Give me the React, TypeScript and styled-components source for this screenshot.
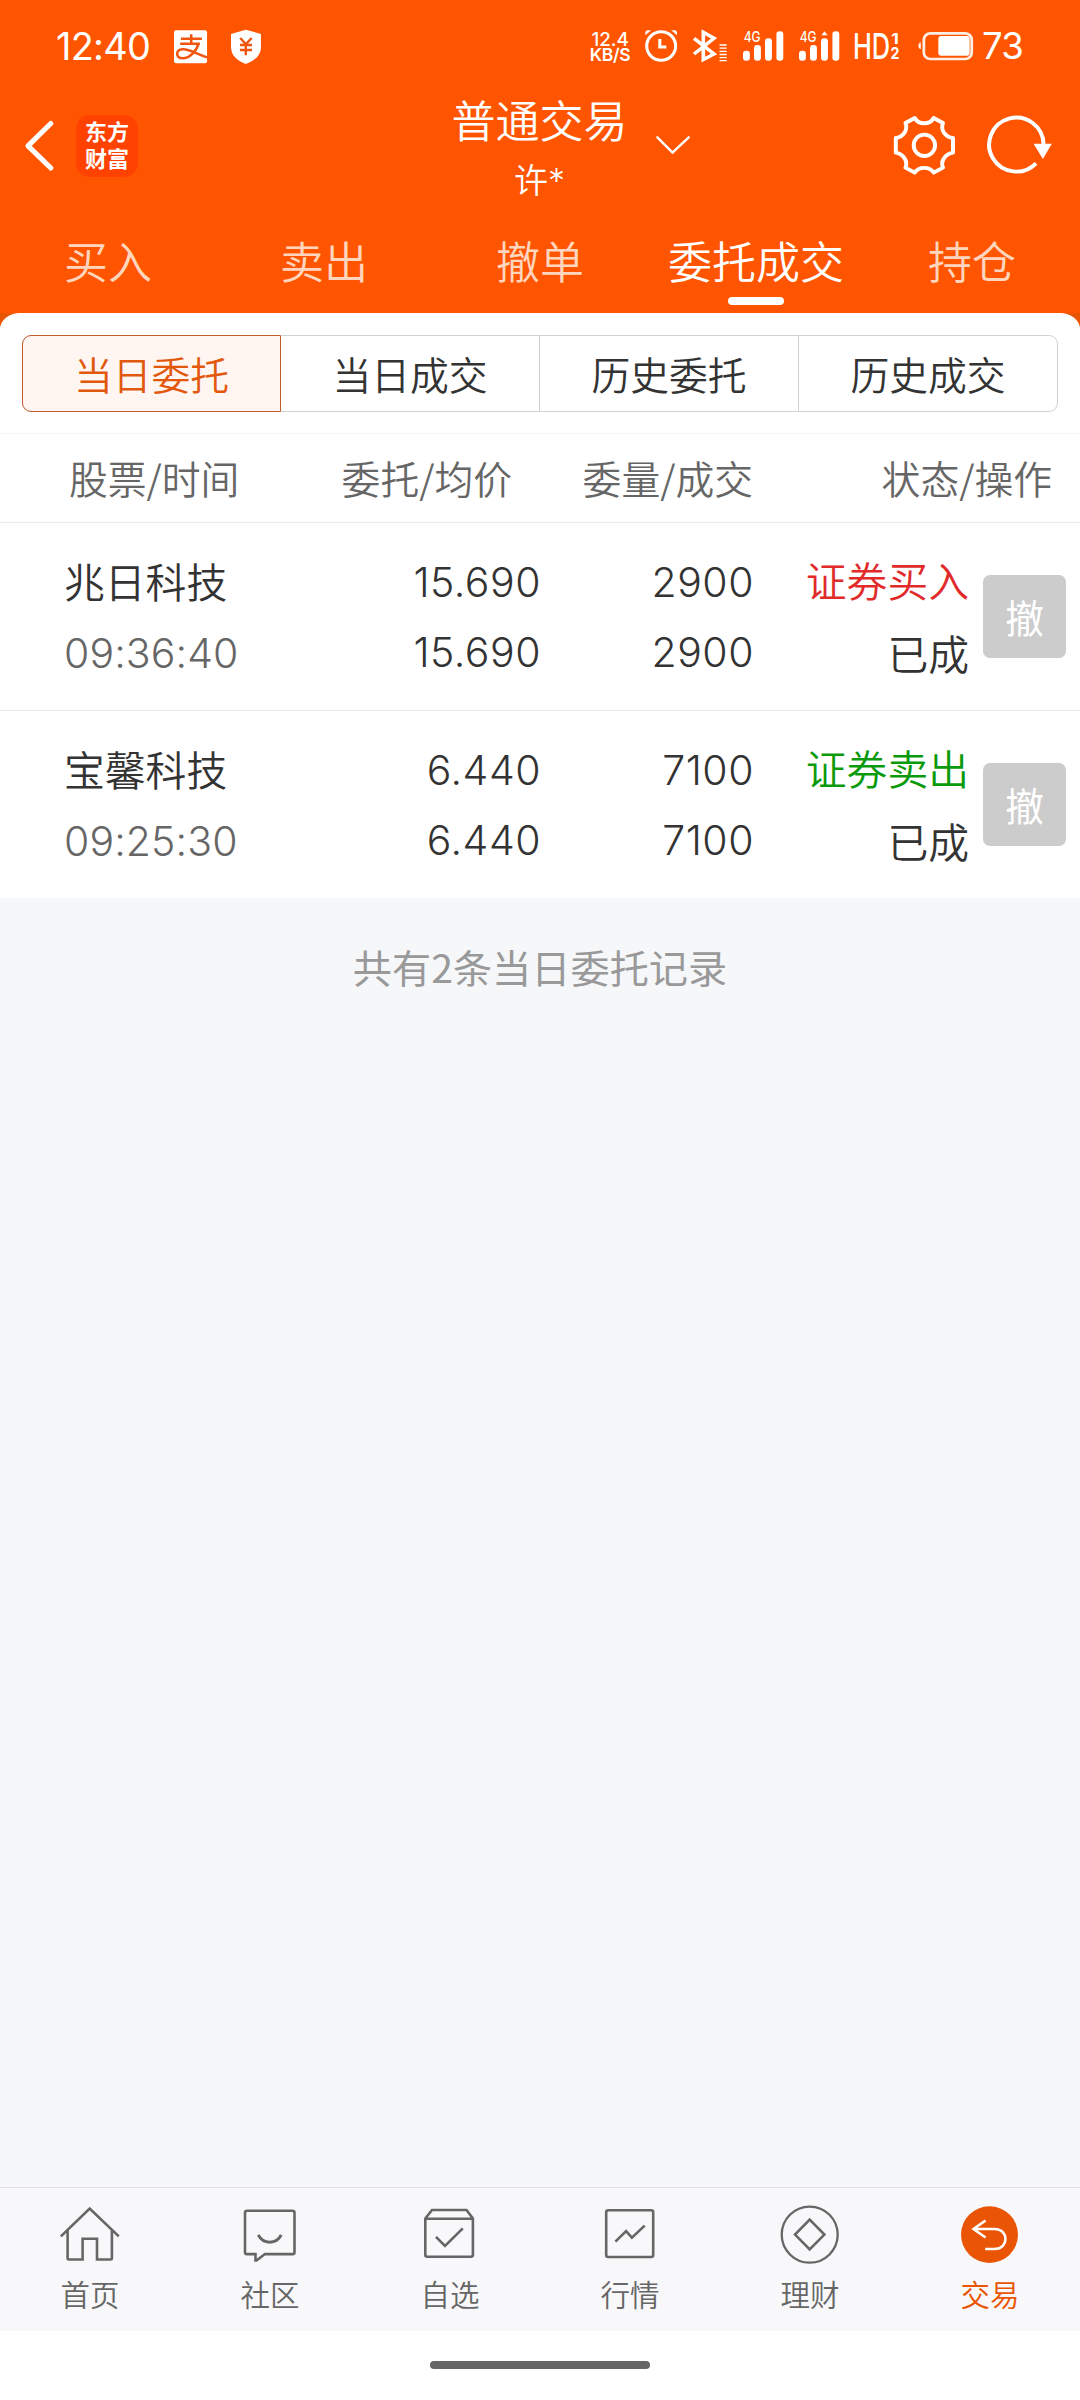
import React from 'react';
import styled, { createGlobalStyle } from 'styled-components';

const CJK = '"Noto Sans CJK SC", "Noto Sans", sans-serif';
const LATIN = 'Inter, Roboto, sans-serif';

const GlobalStyle = createGlobalStyle`
  * { box-sizing: border-box; }
  body { margin: 0; background: #fff; }
`;

const Screen = styled.div`
  width: 1080px;
  height: 2400px;
  display: flex;
  flex-direction: column;
  background: #f6f7f9;
  font-family: ${CJK};
  font-weight: 350;
  color: #333;
  overflow: hidden;
`;

const Header = styled.header`
  height: 313px;
  background: #ff5500;
  color: #fff;
  display: flex;
  flex-direction: column;
`;

const StatusBar = styled.div`
  height: 92px;
  padding: 0 58px 0 56px;
  display: flex;
  align-items: center;
  justify-content: space-between;
`;

const StatusGroup = styled.div`
  display: flex;
  align-items: center;
`;

const StatusText = styled.span<{ $size: number; $width: number; $left?: number }>`
  font-family: ${LATIN};
  font-weight: 400;
  font-size: ${p => p.$size}px;
  line-height: 44px;
  width: ${p => p.$width}px;
  margin-left: ${p => p.$left ?? 0}px;
  letter-spacing: -0.7px;
  white-space: nowrap;
`;

const Speed = styled.div`
  width: 42px;
  display: flex;
  flex-direction: column;
  align-items: center;
  font-family: ${LATIN};
  white-space: nowrap;
  line-height: 15px;
  padding-top: 2px;
`;

const SpeedValue = styled.span`
  font-size: 18.8px;
  font-weight: 450;
`;

const SpeedUnit = styled.span`
  font-size: 17.5px;
  font-weight: 600;
  letter-spacing: -0.3px;
`;

const Glyph = styled.svg<{ $left?: number }>`
  display: block;
  flex: none;
  overflow: visible;
  margin-left: ${p => p.$left ?? 0}px;
`;

const TitleBar = styled.div`
  height: 128px;
  padding: 0 25px 0 24px;
  display: grid;
  grid-template-columns: 1fr 182px 1fr;
`;

const TitleLeft = styled.div`
  display: flex;
  align-items: flex-start;
  padding-top: 23px;
  gap: 20px;
`;

const Logo = styled.div`
  width: 62px;
  height: 62px;
  border-radius: 14px;
  background: #ff4200;
  font-size: 22px;
  font-weight: 700;
  line-height: 27px;
  text-align: center;
  padding-top: 2px;
  white-space: nowrap;
`;

const TitleCenter = styled.div`
  display: flex;
  flex-direction: column;
  align-items: center;
  white-space: nowrap;
`;

const Title = styled.h1`
  margin: 0;
  padding-top: 2px;
  font-size: 44px;
  font-weight: 350;
  line-height: 50px;
  height: 63px;
`;

const Account = styled.span`
  font-size: 34px;
  line-height: 48px;
`;

const Star = styled.span`
  font-family: ${LATIN};
  line-height: 1;
`;

const TitleRight = styled.div`
  display: flex;
  align-items: flex-start;
  padding-top: 20.5px;
`;

const DropSlot = styled.div`
  padding: 22px 0 0 25px;
  flex: 1;
`;

const Tabs = styled.nav`
  height: 93px;
  display: grid;
  grid-template-columns: repeat(5, 1fr);
`;

const Tab = styled.div<{ $active: boolean }>`
  display: flex;
  flex-direction: column;
  align-items: center;
  padding-top: 10px;
  font-size: 44px;
  line-height: 60px;
  color: ${p => (p.$active ? '#fff' : '#ffd5bd')};

  &::after {
    content: '';
    width: 56px;
    height: 8px;
    margin-top: 7px;
    border-radius: 4px;
    background: ${p => (p.$active ? '#fff' : 'transparent')};
  }
`;

const PanelBack = styled.div`
  background: linear-gradient(#ea5504 14px, #fff 14px);
`;

const Panel = styled.main`
  background: #fff;
  border-radius: 20px 20px 0 0 / 16px 16px 0 0;
`;

const Segments = styled.div`
  display: grid;
  grid-template-columns: repeat(4, 1fr);
  height: 120px;
  padding: 22px 22px;
`;

const Segment = styled.div<{ $active: boolean }>`
  height: 77px;
  border: 1px solid ${p => (p.$active ? '#c05a2a' : '#cfd2d3')};
  border-left-width: ${p => (p.$active ? 1 : 0)}px;
  background: ${p => (p.$active ? '#fff6f2' : '#fff')};
  color: ${p => (p.$active ? '#e2580d' : '#333')};
  font-size: 38.8px;
  line-height: 74px;
  text-align: center;

  &:first-child { border-radius: 9px 0 0 9px; }
  &:last-child { border-radius: 0 9px 9px 0; }
`;

const HeadRow = styled.div`
  height: 90px;
  border-top: 1px solid #f5f5f5;
  border-bottom: 1px solid #ebebeb;
  display: grid;
  grid-template-columns: 243px 200px 241px 299px;
  padding-left: 69px;
  font-size: 38.8px;
  line-height: 87px;
  color: #666;
  white-space: nowrap;
`;

const HeadCell = styled.span<{ $right?: boolean }>`
  text-align: ${p => (p.$right ? 'right' : 'left')};
`;

const OrderRow = styled.div`
  height: 188px;
  border-bottom: 1px solid #ebebeb;
  display: grid;
  grid-template-columns: 256px 221px 213px 215px 98px;
  padding: 34px 0 0 64px;

  &:last-child {
    height: 187px;
    border-bottom: 0;
  }
`;

const Cell = styled.div<{ $right?: boolean }>`
  display: flex;
  flex-direction: column;
  align-items: ${p => (p.$right ? 'flex-end' : 'flex-start')};
  white-space: nowrap;
`;

const CjkText = styled.span<{ $color?: string; $shift?: number }>`
  font-size: 40.8px;
  line-height: 50px;
  height: 72px;
  margin-top: ${p => p.$shift ?? 0}px;
  color: ${p => p.$color ?? '#333'};
`;

const Num = styled.span<{ $muted?: boolean }>`
  font-family: ${LATIN};
  font-weight: 320;
  font-size: 41px;
  letter-spacing: ${p => (p.$muted ? 0.1 : 0.5)}px;
  line-height: 50px;
  height: 70px;
  color: ${p => (p.$muted ? '#666' : '#333')};
`;

const CancelButton = styled.button`
  width: 83px;
  height: 83px;
  margin: 18px 0 0 14px;
  padding: 0;
  border: 0;
  border-radius: 7px;
  background: #ccc;
  color: #fff;
  font-family: ${CJK};
  font-weight: 400;
  font-size: 38.7px;
  line-height: 81px;
`;

const Summary = styled.p`
  margin: 0;
  flex: 1;
  padding-top: 38px;
  text-align: center;
  color: #999;
  font-size: 39.2px;
  font-weight: 400;
  line-height: 60px;
`;

const BottomNav = styled.nav`
  height: 144px;
  border-top: 1px solid #e0e0e2;
  background: #f8f8fa;
  display: grid;
  grid-template-columns: repeat(6, 1fr);
`;

const NavItem = styled.div<{ $active: boolean }>`
  display: flex;
  flex-direction: column;
  align-items: center;
  padding-top: 16px;
  font-size: 29.5px;
  line-height: 40px;
  color: ${p => (p.$active ? '#e95504' : '#666')};

  span { margin-top: 9px; }
`;

const GestureArea = styled.div`
  height: 69px;
  background: #fff;
  display: flex;
  justify-content: center;
  padding-top: 30px;
`;

const GestureBar = styled.div`
  width: 220px;
  height: 8px;
  border-radius: 4px;
  background: #666;
`;

interface DrawingProps {
  x: number;
  y?: number;
  w: number;
  h?: number;
  left?: number;
  children: React.ReactNode;
}

function Drawing({ x, y = 80, w, h = 115, left, children }: DrawingProps) {
  return (
    <Glyph
      $left={left}
      width={w / 2.904}
      height={h / 3}
      viewBox={`${x} ${y} ${w} ${h}`}
      preserveAspectRatio="none"
      fill="none"
      stroke="#fff"
    >
      {children}
    </Glyph>
  );
}

function GlyphText({ x, y, size, length, weight = 500, children }: {
  x: number; y: number; size: number; length: number; weight?: number; children: string;
}) {
  return (
    <text
      x={x}
      y={y}
      fontFamily={LATIN}
      fontSize={size}
      fontWeight={weight}
      textLength={length}
      lengthAdjust="spacingAndGlyphs"
      fill="#fff"
      stroke="none"
    >
      {children}
    </text>
  );
}

const AlipayIcon = () => (
  <Drawing x={505} w={96}>
    <rect x="505" y="90" width="96" height="99" rx="6" fill="#fff" stroke="none" />
    <g stroke="#f0560f" strokeWidth="7.5">
      <path d="M525 115H586M555 102V130M523 130H580" />
      <path d="M577 129C570 152 552 173 530 174C509 174 509 149 530 147C550 145 570 162 601 171" />
    </g>
  </Drawing>
);

const ShieldIcon = () => (
  <Drawing x={671} w={88} left={24}>
    <path d="M714 88L758 101V140C758 166 738 182 714 191C690 182 671 166 671 140V101Z" fill="#fff" stroke="none" />
    <path d="M698 113L714 132L731 113M714 132V165M697 134H732M697 149H732" stroke="#f0560f" strokeWidth="7" />
  </Drawing>
);

const AlarmIcon = () => (
  <Drawing x={304} w={94} left={14}>
    <ellipse cx="351" cy="137" rx="42" ry="43" strokeWidth="9" />
    <path d="M347 116V140H366" strokeWidth="9" />
    <path d="M305 105V95L310 90H322ZM397 105V95L392 90H380Z" fill="#fff" stroke="none" />
  </Drawing>
);

const BluetoothIcon = () => (
  <Drawing x={445} w={100} left={16}>
    <path d="M448 114L506 161L475 178V96L506 114L448 161" strokeWidth="10.5" />
    <path d="M522 134H543M522 143.5H543M522 153H543M522 162.5H543M522 172H543M522 181H543" strokeWidth="4" />
  </Drawing>
);

const SignalIcon = ({ second, left }: { second?: boolean; left: number }) => (
  <Drawing x={589} w={118} left={left}>
    <GlyphText x={591} y={126} size={44} length={49} weight={550}>4G</GlyphText>
    <g fill="#fff" stroke="none">
      <rect x="589" y="151" width="20" height="30" rx="9" />
      <rect x="621" y="134" width="20" height="47" rx="9" />
      <rect x="653" y="114" width="20" height="67" rx="9" />
      <rect x="686" y="93" width="20" height="88" rx="9" />
      {second && <path d="M663 93L672 105H654Z" />}
    </g>
  </Drawing>
);

const HdIcon = () => (
  <Drawing x={915} w={130} left={16}>
    <GlyphText x={909} y={176} size={105} length={108} weight={550}>HD</GlyphText>
    <GlyphText x={1020} y={130} size={45} length={22} weight={700}>1</GlyphText>
    <GlyphText x={1018} y={175} size={47} length={26} weight={700}>2</GlyphText>
  </Drawing>
);

const BatteryIcon = () => (
  <Drawing x={1097} w={160} left={18}>
    <rect x="1114" y="99" width="139" height="77" rx="19" strokeWidth="8" strokeOpacity="0.9" />
    <rect x="1156" y="107" width="91" height="59" rx="8" fill="#fff" stroke="none" />
    <path d="M1105 126V147C1096 144 1096 129 1105 126Z" fill="#fff" stroke="none" />
  </Drawing>
);

const BackIcon = () => (
  <svg width="32" height="62" viewBox="0 0 32 62" fill="none" stroke="#fff" strokeWidth="5.2" strokeLinecap="round" strokeLinejoin="round">
    <path d="M26.8 8.5L4 30.8L26.8 53" />
  </svg>
);

const DropIcon = () => (
  <Drawing x={336} y={404} w={100} h={60}>
    <path d="M340 411L384 457L431 411" strokeWidth="7" strokeLinecap="round" />
  </Drawing>
);

const GearIcon = () => (
  <Drawing x={1020} y={338} w={192} h={194}>
    <g strokeWidth="11.5" strokeLinejoin="round">
      <path d="M1089 353C1100 374 1133 374 1144 353L1171 368C1162 391 1180 411 1200 413V457C1180 460 1162 480 1171 502L1144 517C1133 498 1100 498 1089 517L1062 502C1071 480 1053 460 1034 457V413C1053 411 1071 391 1062 368Z" />
      <ellipse cx="1117" cy="435" rx="31" ry="32" />
    </g>
  </Drawing>
);

const RefreshIcon = () => (
  <Drawing x={1290} y={338} w={205} h={194} left={27}>
    <path d="M1441 489A79 81 0 1 1 1463 432" strokeWidth="11.5" />
    <path d="M1434 430H1487L1461 476Z" fill="#fff" stroke="none" />
  </Drawing>
);

const navIcons: Record<string, React.ReactNode> = {
  首页: <path d="M.9 33.5L29.7 4.8L58.8 33.5M7.6 27V56Q7.6 57.3 9 57.3H22.6V35.8H37V57.3H50.5Q51.9 57.3 51.9 56V27" />,
  社区: (
    <>
      <path d="M7 7H52.5Q54.5 7 54.5 9V49.8Q54.5 51.8 52.5 51.8H25L16.5 58.5H15.5V51.8H7Q5 51.8 5 49.8V9Q5 7 7 7Z" />
      <path d="M18.3 32C23 42 36.5 42 41.2 32" strokeWidth="2.9" />
    </>
  ),
  自选: (
    <>
      <path d="M5.3 15L12 6.3H46.5L52.9 15V52.5Q52.9 54.5 50.9 54.5H7.3Q5.3 54.5 5.3 52.5ZM5.3 15.3H52.9" />
      <path d="M16 33.9L25 43.3L42.8 25.3" />
    </>
  ),
  行情: (
    <>
      <rect x="6.2" y="6.4" width="47" height="48.4" rx="2" />
      <path d="M15.4 39L26.1 28L31.9 34.7L44.7 22.3" />
    </>
  ),
  理财: (
    <>
      <ellipse cx="29.7" cy="31.6" rx="28" ry="29" strokeWidth="2.3" />
      <path d="M29.7 16.2L44.4 31.6L29.7 47L15 31.6Z" />
    </>
  ),
  交易: (
    <>
      <ellipse cx="29.5" cy="31.6" rx="28.5" ry="29.3" fill="#e95504" stroke="none" />
      <path d="M25.6 17L13.5 25.9L25.6 34.6M13.5 25.9H34.8C49 25.9 49 46.6 34.8 46.6H25.2" stroke="#fff" />
    </>
  ),
};

const tabs = ['买入', '卖出', '撤单', '委托成交', '持仓'];
const segments = ['当日委托', '当日成交', '历史委托', '历史成交'];
const orders = [
  { name: '兆日科技', time: '09:36:40', price: '15.690', avg: '15.690', qty: '2900', filled: '2900', side: '证券买入', color: '#e12a2a', status: '已成' },
  { name: '宝馨科技', time: '09:25:30', price: '6.440', avg: '6.440', qty: '7100', filled: '7100', side: '证券卖出', color: '#0b9a0b', status: '已成' },
];

export default function App() {
  return (
    <>
      <GlobalStyle />
      <Screen>
        <Header>
          <StatusBar>
            <StatusGroup>
              <StatusText $size={37.8} $width={118}>12:40</StatusText>
              <AlipayIcon />
              <ShieldIcon />
            </StatusGroup>
            <StatusGroup>
              <Speed>
                <SpeedValue>12.4</SpeedValue>
                <SpeedUnit>KB/S</SpeedUnit>
              </Speed>
              <AlarmIcon />
              <BluetoothIcon />
              <SignalIcon left={15} />
              <SignalIcon left={15} second />
              <HdIcon />
              <BatteryIcon />
              <StatusText $size={36.5} $width={40} $left={9}>73</StatusText>
            </StatusGroup>
          </StatusBar>
          <TitleBar>
            <TitleLeft>
              <BackIcon />
              <Logo>东方<br />财富</Logo>
            </TitleLeft>
            <TitleCenter>
              <Title>普通交易</Title>
              <Account>许<Star>*</Star></Account>
            </TitleCenter>
            <TitleRight>
              <DropSlot><DropIcon /></DropSlot>
              <GearIcon />
              <RefreshIcon />
            </TitleRight>
          </TitleBar>
          <Tabs>
            {tabs.map(t => <Tab key={t} $active={t === '委托成交'}>{t}</Tab>)}
          </Tabs>
        </Header>
        <PanelBack>
          <Panel>
            <Segments>
              {segments.map((s, i) => <Segment key={s} $active={i === 0}>{s}</Segment>)}
            </Segments>
            <HeadRow>
              <HeadCell>股票/时间</HeadCell>
              <HeadCell $right>委托/均价</HeadCell>
              <HeadCell $right>委量/成交</HeadCell>
              <HeadCell $right>状态/操作</HeadCell>
            </HeadRow>
            {orders.map(o => (
              <OrderRow key={o.name}>
                <Cell>
                  <CjkText $shift={-1}>{o.name}</CjkText>
                  <Num $muted>{o.time}</Num>
                </Cell>
                <Cell $right><Num>{o.price}</Num><Num>{o.avg}</Num></Cell>
                <Cell $right><Num>{o.qty}</Num><Num>{o.filled}</Num></Cell>
                <Cell $right>
                  <CjkText $color={o.color} $shift={-2}>{o.side}</CjkText>
                  <CjkText $shift={1}>{o.status}</CjkText>
                </Cell>
                <CancelButton>撤</CancelButton>
              </OrderRow>
            ))}
          </Panel>
        </PanelBack>
        <Summary>共有2条当日委托记录</Summary>
        <BottomNav>
          {Object.keys(navIcons).map(label => (
            <NavItem key={label} $active={label === '交易'}>
              <Glyph width="60" height="60" viewBox="0 0 60 62" preserveAspectRatio="none" fill="none" stroke="#666" strokeWidth="2.6">
                {navIcons[label]}
              </Glyph>
              <span>{label}</span>
            </NavItem>
          ))}
        </BottomNav>
        <GestureArea><GestureBar /></GestureArea>
      </Screen>
    </>
  );
}
